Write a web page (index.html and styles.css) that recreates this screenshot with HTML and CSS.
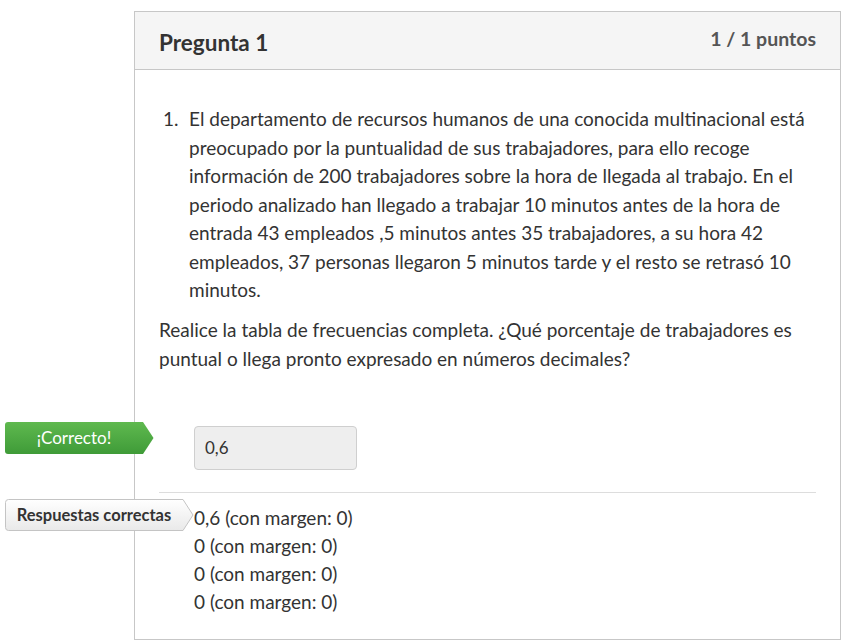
FILE: index.html
```html
<!DOCTYPE html>
<html lang="es">
<head>
<meta charset="utf-8">
<title>Pregunta 1</title>
<link rel="stylesheet" href="styles.css">
</head>
<body>
<div class="card">
  <div class="card-header">
    <h2 class="title">Pregunta 1</h2>
    <div class="points">1 / 1 puntos</div>
  </div>
  <div class="card-body">
    <div class="item">
      <span class="num">1.</span>
      <span class="item-text">El departamento de recursos humanos de una conocida multinacional está preocupado por la puntualidad de sus trabajadores, para ello recoge información de 200 trabajadores sobre la hora de llegada al trabajo. En el periodo analizado han llegado a trabajar 10 minutos antes de la hora de entrada 43 empleados ,5 minutos antes 35 trabajadores, a su hora 42 empleados, 37 personas llegaron 5 minutos tarde y el resto se retrasó 10 minutos.</span>
    </div>
    <p class="question">Realice la tabla de frecuencias completa. ¿Qué porcentaje de trabajadores es puntual o llega pronto expresado en números decimales?</p>

    <div class="answer-row">
      <div class="tag tag-correct">
        <svg class="tag-bg" width="149" height="32" viewBox="0 0 149 32">
          <defs>
            <linearGradient id="g1" x1="0" y1="0" x2="0" y2="1">
              <stop offset="0" stop-color="#5fb94f"/>
              <stop offset="1" stop-color="#3f9b38"/>
            </linearGradient>
          </defs>
          <path d="M3 0 H138 L148.5 16 L138 32 H3 Q0 32 0 29 V3 Q0 0 3 0 Z" fill="url(#g1)"/>
        </svg>
        <span class="tag-text">¡Correcto!</span>
      </div>
      <div class="input-box">0,6</div>
    </div>

    <hr class="sep">

    <div class="answers">
      <div class="tag tag-answers">
        <svg class="tag-bg" width="189" height="32" viewBox="0 0 189 32">
          <defs>
            <linearGradient id="g2" x1="0" y1="0" x2="0" y2="1">
              <stop offset="0" stop-color="#ffffff"/>
              <stop offset="1" stop-color="#e9e9e9"/>
            </linearGradient>
          </defs>
          <path d="M3.5 0.5 H178 L188 16 L178 31.5 H3.5 Q0.5 31.5 0.5 28.5 V3.5 Q0.5 0.5 3.5 0.5 Z" fill="url(#g2)" stroke="#c4c4c4" stroke-width="1"/>
        </svg>
        <span class="tag-text">Respuestas correctas</span>
      </div>
      <div class="answer-line">0,6 (con margen: 0)</div>
      <div class="answer-line">0 (con margen: 0)</div>
      <div class="answer-line">0 (con margen: 0)</div>
      <div class="answer-line">0 (con margen: 0)</div>
    </div>
  </div>
</div>
</body>
</html>
```

FILE: styles.css
```css
html, body {
  margin: 0;
  padding: 0;
  background: #ffffff;
}
body {
  font-family: Lato, "Open Sans", "Liberation Sans", sans-serif;
  color: #333333;
}
.card {
  margin: 11px 0 0 134px;
  width: 705px;
  border: 1px solid #c7c7c7;
  background: #ffffff;
  box-sizing: content-box;
}
.card-header {
  display: flex;
  justify-content: space-between;
  align-items: flex-start;
  height: 58px;
  box-sizing: border-box;
  padding: 0 24px;
  background: #f5f5f5;
  border-bottom: 1px solid #c7c7c7;
}
.title {
  margin: 0;
  padding-top: 18px;
  font-size: 22.5px;
  line-height: 26px;
  font-weight: 700;
  color: #333333;
}
.points {
  padding-top: 15px;
  font-size: 19.5px;
  line-height: 24px;
  font-weight: 700;
  color: #555555;
}
.card-body {
  padding: 35px 24px 23px 24px;
  font-size: 19px;
  line-height: 28.5px;
}
.item {
  display: flex;
}
.num {
  flex: 0 0 30px;
  padding-left: 4px;
  box-sizing: border-box;
}
.item-text {
  flex: 1;
}
.question {
  margin: 11.5px 0 0 0;
}
.answer-row {
  position: relative;
  margin-top: 53px;
  padding-left: 35px;
}
.input-box {
  width: 163px;
  height: 44px;
  box-sizing: border-box;
  background: #eeeeee;
  border: 1px solid #cfcfcf;
  border-radius: 4px;
  padding-left: 10px;
  font-size: 17px;
  line-height: 42px;
  color: #333333;
}
.sep {
  margin: 22px 0 0 0;
  border: 0;
  border-top: 1px solid #dddddd;
  height: 0;
}
.answers {
  position: relative;
  margin-top: 11px;
  padding-left: 35px;
  font-size: 19px;
  line-height: 28px;
}
.tag {
  position: absolute;
  height: 32px;
}
.tag-bg {
  position: absolute;
  left: 0;
  top: 0;
  display: block;
}
.tag-text {
  position: relative;
  display: block;
  line-height: 32px;
  text-align: center;
}
.tag-correct {
  left: -154px;
  top: -4px;
  width: 149px;
}
.tag-correct .tag-text {
  width: 138px;
  font-size: 17px;
  color: #ffffff;
}
.tag-answers {
  left: -154px;
  top: -5px;
  width: 189px;
}
.tag-answers .tag-text {
  width: 178px;
  font-size: 16.5px;
  font-weight: 700;
  color: #333333;
}
```
